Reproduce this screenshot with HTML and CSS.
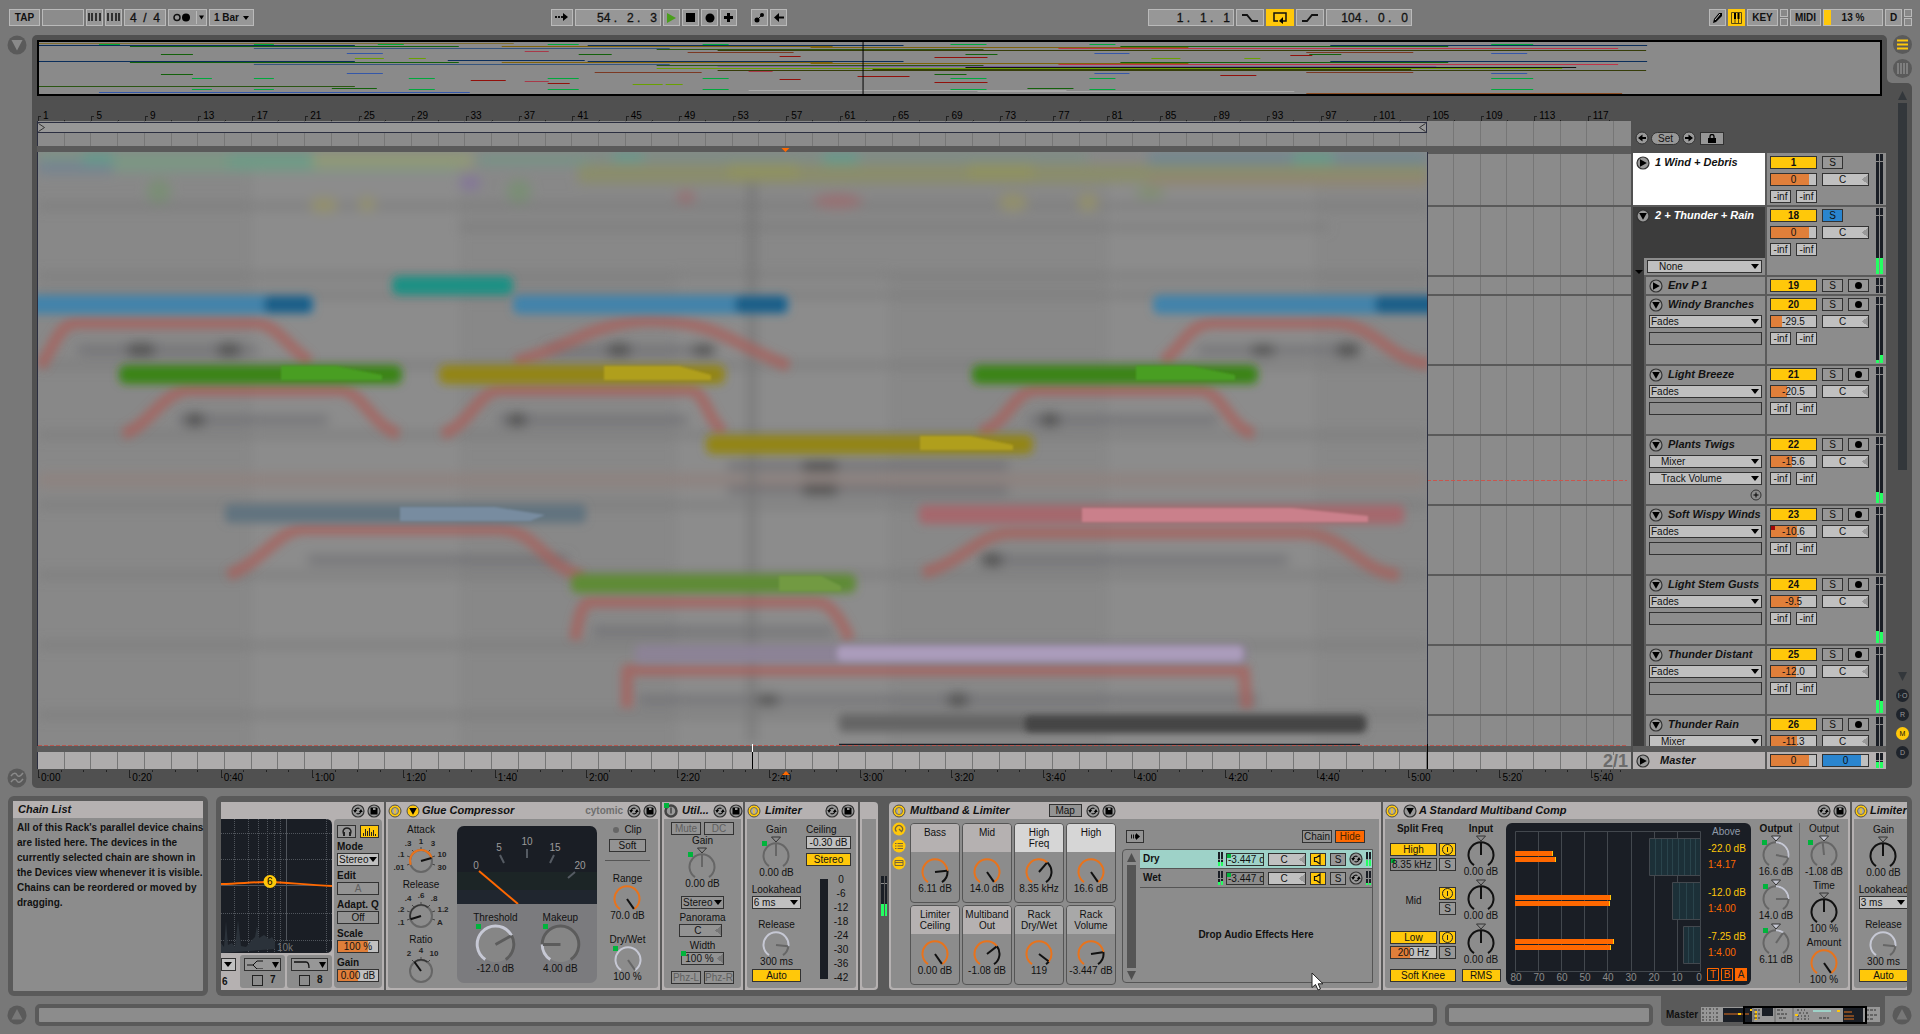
FILE: index.html
```html
<!DOCTYPE html>
<html lang="en">
<head>
<meta charset="utf-8">
<title>Arrangement</title>
<link rel="stylesheet" href="styles.css">
</head>
<body>
<svg class="defs" aria-hidden="true">
  <symbol id="knob" viewBox="0 0 28 28"><path class="k-track" pathLength="100" d="M7 24.2A12.5 12.5 0 1 1 21 24.2"/><path class="k-arc" pathLength="100" d="M7 24.2A12.5 12.5 0 1 1 21 24.2"/><path class="k-needle" d="M14 14V2"/></symbol>
  <symbol id="knob-c" viewBox="0 0 28 34"><path class="k-tri" d="M9.500 1h9l-4.500 5z"/><path class="k-track" pathLength="100" d="M7 30.200A12.500 12.500 0 1 1 21 30.200"/><path class="k-arc" pathLength="100" d="M7 30.200A12.500 12.500 0 1 1 21 30.200"/><path class="k-needle k-low" d="M14 20V8"/></symbol>
  <symbol id="power" viewBox="0 0 14 14"><circle cx="7" cy="7" r="6" fill="#ffc80a" stroke="#4d4d4d"/><circle cx="7" cy="7" r="3.500" fill="#aaa" stroke="#77704a"/><path d="M7 4.500v5" stroke="#ffc80a" stroke-width="1.500"/></symbol>
  <symbol id="power-off" viewBox="0 0 14 14"><circle cx="7" cy="7" r="5.500" fill="#999" stroke="#444" stroke-width="2.500"/><path d="M7 3.500v6" stroke="#444" stroke-width="1.500"/></symbol>
  <symbol id="down" viewBox="0 0 14 14"><circle cx="7" cy="7" r="6" fill="#999" stroke="#333" stroke-width="1.200"/><path d="M3.200 4h7.600L7 10.800z"/></symbol>
  <symbol id="down-y" viewBox="0 0 14 14"><circle cx="7" cy="7" r="6" fill="#ffc80a" stroke="#4d4d4d"/><path d="M3.200 4h7.600L7 10.800z"/></symbol>
  <symbol id="right" viewBox="0 0 14 14"><circle cx="7" cy="7" r="6" fill="#999" stroke="#333" stroke-width="1.200"/><path d="M4 3.200v7.600L10.800 7z"/></symbol>
  <symbol id="swap" viewBox="0 0 14 14"><circle cx="7" cy="7" r="6" fill="#999" stroke="#333" stroke-width="1.200"/><path d="M8.500 4.500C6 3.500 4.500 5 4 6.500M5.500 9.500C8 10.500 9.500 9 10 7.500" fill="none" stroke="#111" stroke-width="1.200"/><path d="M2.300 6h3.800L4 9zM7.900 8h3.800L10 5z"/></symbol>
  <symbol id="save" viewBox="0 0 14 14"><circle cx="7" cy="7" r="6" fill="#999" stroke="#333" stroke-width="1.200"/><path d="M3.500 3.500h6l1 1v6h-7z"/><path d="M6 4h2.500v2H6z" fill="#999"/></symbol>
  <symbol id="alt" viewBox="0 0 20 20"><circle cx="10" cy="10" r="9.500" fill="#5a5a5a"/><path d="M4.500 5h11L10 15.500z" fill="#8a8a8a"/></symbol>
  <symbol id="tri-up" viewBox="0 0 20 20"><circle cx="10" cy="10" r="9.500" fill="#5a5a5a"/><path d="M4.500 14.500h11L10 4z" fill="#787878"/></symbol>
  <symbol id="speaker" viewBox="0 0 12 11"><path d="M2.500 3.500h2L8 1v9L4.500 7.500h-2z" fill="none" stroke="#111" stroke-width="1.200"/></symbol>
</svg>

<header class="toolbar">
  <div class="group">
    <button class="tb w31">TAP</button>
    <input class="tb w42 blank" aria-label="Tempo" value="">
    <button class="tb w17" aria-label="Nudge down"><svg width="13" height="9"><path d="M1 0v8M4 0v8M8 0v8M12 0v8" stroke="#111" stroke-width="1.500"/></svg></button>
    <button class="tb w17" aria-label="Nudge up"><svg width="13" height="9"><path d="M1 0v8M5 0v8M9 0v8M12 0v8" stroke="#111" stroke-width="1.500"/></svg></button>
    <input class="tb w42 digits" aria-label="Time signature" value="4  /  4">
    <button class="tb w39 split" aria-label="Metronome"><svg width="36" height="13"><circle cx="7" cy="6.500" r="3" fill="none" stroke="#111" stroke-width="1.500"/><circle cx="16" cy="6.500" r="4"/><path d="M26.500 0v13" stroke="#bababa"/><path d="M29 4.500h5l-2.500 4z"/></svg></button>
    <span class="pick tbp w45"><select class="tb" aria-label="Quantization"><option>1 Bar</option></select></span>
  </div>
  <div class="grow-a"></div>
  <div class="group">
    <button class="tb w22" aria-label="Follow"><svg width="14" height="9"><path d="M0 4h2M3 4h2M6 4h4" stroke="#111" stroke-width="2"/><path d="M8 0v8l5-4z"/></svg></button>
    <input class="tb w86 digits num" aria-label="Position" value="54 .   2 .   3">
    <button class="tb w17" aria-label="Play"><svg width="9" height="10"><path d="M0 0v10l9-5z" fill="#4a9e1c"/></svg></button>
    <button class="tb w17" aria-label="Stop"><svg width="9" height="9"><path d="M0 0h9v9H0z"/></svg></button>
    <button class="tb w17" aria-label="Record"><svg width="10" height="10"><circle cx="5" cy="5" r="4.500"/></svg></button>
    <button class="tb w17" aria-label="Overdub"><svg width="9" height="9"><path d="M4.500 0v9M0 4.500h9" stroke="#000" stroke-width="3"/></svg></button>
    <button class="tb w17 apart" aria-label="Automation arm"><svg width="11" height="11"><path d="M3 8L8 3" stroke="#111"/><circle cx="3" cy="8" r="2.500"/><circle cx="8" cy="3" r="2"/></svg></button>
    <button class="tb w17" aria-label="Re-enable automation"><svg width="10" height="9"><path d="M2 4.500h8" stroke="#000" stroke-width="2"/><path d="M5 0v9L0 4.500z"/></svg></button>
  </div>
  <div class="grow-b"></div>
  <div class="group">
    <input class="tb w86 digits num" aria-label="Loop start" value="1 .   1 .   1">
    <button class="tb w28" aria-label="Punch in"><svg width="16" height="10"><path d="M0 2h5l5 6h6" fill="none" stroke="#111" stroke-width="1.800"/></svg></button>
    <button class="tb w28 on" aria-label="Loop"><svg width="14" height="12"><path d="M5 9H1V1h12v8h-3" fill="none" stroke="#111" stroke-width="1.500"/><path d="M10 5v7L6 9z"/></svg></button>
    <button class="tb w28" aria-label="Punch out"><svg width="16" height="10"><path d="M0 8h5l5-6h6" fill="none" stroke="#111" stroke-width="1.800"/></svg></button>
    <input class="tb w86 digits num" aria-label="Loop length" value="104 .   0 .   0">
  </div>
  <div class="grow-a"></div>
  <div class="group">
    <button class="tb w17" aria-label="Draw"><svg width="11" height="12"><path d="M1 11l1-4 5-6h3v3l-6 6z"/><path d="M3 8l5-6" stroke="#ccc"/></svg></button>
    <button class="tb w17 on" aria-label="Computer keyboard"><svg width="11" height="12"><path d="M.500.500h10v11H.500zM4 7v5M7.500 7v5" fill="none" stroke="#5a4a10"/><path d="M3 1h2v6H3zM6.500 1h2v6h-2z"/></svg></button>
    <button class="tb w31">KEY</button>
    <span class="leds"><i></i><i></i></span>
    <button class="tb w31">MIDI</button>
    <output class="tb w60 cpu">13 %</output>
    <button class="tb w17">D</button>
    <span class="leds"><i></i><i></i></span>
  </div>
</header>

<main class="arranger">
  <div class="rail">
    <button class="round" aria-label="Browser"><svg width="20" height="20"><use href="#alt"/></svg></button>
    <button class="round" aria-label="Groove pool"><svg width="20" height="20" viewBox="0 0 20 20"><circle cx="10" cy="10" r="9.500" fill="#5a5a5a"/><path d="M4 8c3-4 5-3 6-1s3 2 6-2M4 14c3-4 5-3 6-1s3 2 6-2" fill="none" stroke="#8a8a8a" stroke-width="1.500"/></svg></button>
  </div>
  <section class="arr-left">
    <div class="overview">
      <svg viewBox="39 42 1842 52" preserveAspectRatio="none">
        <g fill="none" stroke-width="1">
          <path stroke="#7d6b30" d="M39 43.500H514"/>
          <path stroke="#00a83c" d="M99 44.500h21M254 44.500h20M378 44.500h26M548 44.500h31M703 44.500h26M951 44.500h36M1090 44.500h26M1492 44.500h42M192 78.500h20M254 78.500h20M409 78.500h26M548 78.500h31M703 78.500h26M951 78.500h36M1090 78.500h26M1492 78.500h42M192 89.500h20M254 89.500h20M409 89.500h26M548 89.500h31M703 89.500h26M951 89.500h36M1090 89.500h26M1492 89.500h42"/>
          <path stroke="#0a2d5a" d="M39 45.500H355M588 45.500H904M1331 45.500H1648M448 60.500H585M39 61.500H355M588 61.500H904M1331 61.500H1648"/>
          <path stroke="#12600a" d="M130 46.500H459M1121 46.500H1449M161 54.500H193M579 54.500H612M966 54.500H998M1310 54.500H1342M130 62.500H459M1121 62.500H1449M161 74.500H193M935 74.500H967M332 88.500H377M1028 88.500H1074"/>
          <path stroke="#80620a" d="M502 46.500H833M811 47.500H1189M502 62.500H833M811 63.500H1189"/>
          <path stroke="#35547c" d="M254 48.500H670M254 64.500H670"/>
          <path stroke="#bf3248" d="M1059 48.500H1619M1059 64.500H1619"/>
          <path stroke="#2a5512" d="M657 49.500H984M657 65.500H984M39 86.500H355"/>
          <path stroke="#353c08" d="M718 50.500H1647M718 70.500H1647M873 69.500H1412"/>
          <path stroke="#a83848" d="M525 51.500h24M749 71.500h24M525 81.500h24"/>
          <path stroke="#7a3822" d="M688 52.500H794M1307 52.500H1414M595 72.500H702M1307 72.500H1414"/>
          <path stroke="#3356a8" d="M347 53.500h36M1095 53.500h35M1492 53.500h36M347 73.500h36M1095 73.500h35M1492 73.500h36M99 92.500H470"/>
          <path stroke="#920f0a" d="M1291 55.500h22M780 56.500h21M935 57.500h53M1221 75.500h36M858 76.500h52M780 79.500h21M471 80.500h35M935 82.500h53M548 83.500h22"/>
          <path stroke="#68a000" d="M355 58.500h29M409 58.500h17M1152 58.500h29M1245 58.500h16M657 68.500H1563M633 84.500h30M666 84.500h17"/>
          <path stroke="#7a6098" d="M718 66.500H1437"/>
          <path stroke="#111" d="M966 67.500H1577"/>
          <path stroke="#a8a8a8" d="M749 90.500H1067M978 91.500H1295"/>
          <path stroke="#8a4a20" d="M1307 93.500H1623"/>
        </g>
        <path d="M863.500 42v52" stroke="#000"/>
      </svg>
    </div>
    <div class="body">
      <div class="timeline">
        <div class="bars">
          <span>1</span><span>5</span><span>9</span><span>13</span><span>17</span><span>21</span><span>25</span><span>29</span><span>33</span><span>37</span><span>41</span><span>45</span><span>49</span><span>53</span><span>57</span><span>61</span><span>65</span><span>69</span><span>73</span><span>77</span><span>81</span><span>85</span><span>89</span><span>93</span><span>97</span><span>101</span><span>105</span><span>109</span><span>113</span><span>117</span>
        </div>
        <div class="scrub lines">
          <div class="brace"><svg width="7" height="9"><path d="M.500.500l6 4-6 4" fill="none" stroke="#333"/></svg><svg width="7" height="9"><path d="M6.500.500l-6 4 6 4" fill="none" stroke="#333"/></svg></div>
        </div>
        <div class="gap"><svg viewBox="0 0 1593 6" preserveAspectRatio="none"><path d="M744 2h8l-4 4z" fill="#ff6a00"/></svg></div>
        <div class="canvas lines">
          <svg viewBox="0 0 1593 594" preserveAspectRatio="none">
            <defs>
              <clipPath id="sel"><path d="M0 0h1389v594H0z"/></clipPath>
              <filter id="b1" x="-5%" y="-20%" width="110%" height="140%"><feGaussianBlur stdDeviation="1"/></filter>
              <filter id="b3" x="-5%" y="-50%" width="110%" height="200%"><feGaussianBlur stdDeviation="3"/></filter>
              <filter id="b4" x="-5%" y="-5%" width="110%" height="110%"><feGaussianBlur stdDeviation="4"/></filter>
              <filter id="b5" x="-5%" y="-5%" width="110%" height="110%"><feGaussianBlur stdDeviation="6"/></filter>
            </defs>
            <path d="M1389 0h204v2H1389zM1389 53h204v2H1389zM1389 123h204v2H1389zM1389 142h204v2H1389zM1389 212h204v2H1389zM1389 282h204v2H1389zM1389 352h204v2H1389zM1389 422h204v2H1389zM1389 492h204v2H1389zM1389 562h204v2H1389z" fill="#5a5a5a"/>
            <path d="M1389 328.500h200" stroke="#c9564e" stroke-dasharray="4 2"/>
            <g clip-path="url(#sel)">
              <path d="M0 0h1389v594H0z" fill="#888"/>
              <g filter="url(#b5)">
                <path d="M215 20h206v580H215zM640 120h210v480H640zM1071 20h205v580h-205z" fill="#8c8c8c"/>
                <path d="M0 54h1389M0 124h1389M0 143h1389M0 213h1389M0 283h1389M0 353h1389M0 423h1389M0 493h1389M0 563h1389M420 75h870" stroke="#777" stroke-width="7" opacity=".6"/>
                <path d="M0 328h1389" stroke="#90807c" stroke-width="14" opacity=".7"/>
                <path d="M0 0h420v20H0z" fill="#7b9684"/><path d="M0 8h75v14H0z" fill="#768490"/><path d="M190 0h90v18h-90z" fill="#6f9a86"/>
                <path d="M275 0h160v16H275z" fill="#909878"/><path d="M440 2h110v12H440z" fill="#789286"/><path d="M550 0h500v10H550z" fill="#7d8d84"/><path d="M1110 0h279v14h-279z" fill="#728790"/>
                <path d="M540 13h850v18H540z" fill="#8a8d6a"/><path d="M1110 24h280v10h-280z" fill="#908672"/>
                <path d="M785 0h35v12h-35zM1255 0h40v12h-40zM575 0h30v10h-30zM45 0h30v12H45z" fill="#659a8a"/>
                <path d="M930 12h65v14h-65zM690 12h70v14h-70z" fill="#90925e"/>
                <circle cx="121" cy="39" r="12" fill="#7a8e76"/><circle cx="481" cy="39" r="12" fill="#7a8e76"/>
                <ellipse cx="286" cy="53" rx="14" ry="8" fill="#928f6c"/><ellipse cx="329" cy="52" rx="9" ry="8" fill="#918f70"/>
                <ellipse cx="432" cy="31" rx="11" ry="7" fill="#84769a"/><ellipse cx="648" cy="45" rx="9" ry="6" fill="#996f72"/>
                <ellipse cx="800" cy="49" rx="24" ry="7" fill="#987072"/><ellipse cx="975" cy="50" rx="14" ry="9" fill="#928f6c"/><ellipse cx="1050" cy="50" rx="10" ry="9" fill="#928f6c"/><ellipse cx="1112" cy="41" rx="15" ry="6" fill="#808e72"/>
                <path d="M40 198h180M510 198h150M1160 198h160M140 268h150M460 268h190M990 268h190M690 314h280M690 338h280M270 408h260M950 408h300M555 479h240M600 548h620" stroke="#707073" stroke-width="8"/>
                <path d="M90 198h26M180 198h22M570 198h22M655 198h22M1214 198h22M1299 198h22M148 268h18M470 268h18M1003 268h18M765 314h34M765 338h34M944 408h20M720 548h20M910 548h20" stroke="#505050" stroke-width="12"/>
                <path d="M714 30v560" stroke="#727272" stroke-width="6"/>
              </g>
              <g filter="url(#b4)" fill="none" stroke="#a8605b" stroke-width="12" stroke-linejoin="round" opacity=".75">
                <path d="M2 215C18 190 22 172 38 171H218C238 172 250 195 272 210"/>
                <path d="M477 210C510 200 530 190 542 185C575 170 600 168 620 169C680 170 700 195 751 214"/>
                <path d="M85 282C110 275 125 240 150 238H302C325 240 335 275 361 282"/>
                <path d="M404 282C430 275 440 240 461 238H652C668 240 670 270 686 280"/>
                <path d="M190 423C225 410 240 378 265 377H459C500 378 500 410 545 425"/>
                <path d="M537 488Q542 450 552 450H778Q796 450 812 488"/>
                <path d="M589 556V518H1206L1209 557"/>
                <path d="M885 421C925 410 940 382 971 381H1264C1310 382 1320 420 1361 423"/>
                <path d="M942 280C970 272 975 240 997 238H1162C1185 240 1190 275 1216 282"/>
                <path d="M1125 209C1145 195 1150 172 1175 171H1295C1340 172 1350 210 1392 212"/>
              </g>
              <g filter="url(#b4)">
                <g fill="#4383aa"><rect x="-12" y="143" width="288" height="19" rx="6"/><rect x="475" y="143" width="276" height="19" rx="6"/><rect x="1115" y="143" width="290" height="19" rx="6"/></g>
                <g fill="#1a5f88"><rect x="226" y="144" width="48" height="17" rx="6"/><rect x="697" y="144" width="52" height="17" rx="6"/><rect x="1337" y="144" width="70" height="17" rx="6"/></g>
                <rect x="354" y="124" width="121" height="19" rx="7" fill="#1c9084"/>
                <g fill="#3a8418"><rect x="81" y="213" width="283" height="19" rx="7"/><rect x="934" y="213" width="286" height="19" rx="7"/></g>
                <g fill="#938514"><rect x="401" y="213" width="286" height="19" rx="7"/><rect x="668" y="283" width="327" height="19" rx="7"/></g>
                <rect x="187" y="352" width="361" height="19" rx="5" fill="#62737f"/>
                <rect x="533" y="422" width="285" height="19" rx="7" fill="#5e8b34"/>
                <rect x="597" y="493" width="612" height="18" rx="5" fill="#8c8296"/>
                <rect x="801" y="562" width="528" height="18" rx="4" fill="#656565"/>
                <rect x="881" y="353" width="485" height="19" rx="5" fill="#a5686d"/>
              </g>
              <g filter="url(#b1)">
                <g fill="#4a9e22"><path d="M243 214h55l46 9v5H243zM1098 214h55l44 9v5h-99z"/></g>
                <g fill="#b09f1f"><path d="M566 214h75l32 9v5H566zM882 284h50l43 9v5h-93z"/></g>
                <path d="M362 355h95l50 8-15 6H362z" fill="#788ca0"/><path d="M741 424h42l20 10v5h-62z" fill="#729a42"/>
                <path d="M1044 356h210l76 8v6h-286z" fill="#ca808b"/>
              </g>
              <rect x="799" y="494" width="406" height="15" rx="5" fill="#ab9cbb" filter="url(#b3)"/>
              <rect x="987" y="564" width="340" height="16" rx="5" fill="#444" filter="url(#b3)"/>
              <path d="M801 592.500h521" stroke="#1a1e25" stroke-width="1.500"/>
            </g>
            <path d="M0 593.500h1590" stroke="#b5564e" stroke-dasharray="4 2"/>
            <path d="M1389.500 0v594" stroke="#2b2e40"/>
          </svg>
        </div>
        <div class="gap"></div>
        <div class="master-lane lines"><b>2/1</b><svg viewBox="0 -8 1593 32" preserveAspectRatio="none"><path d="M714.500-8v8" stroke="#fff"/><path d="M714.500 0v17M1389.500-8v25" stroke="#000"/><path d="M744 23h8l-4-4z" fill="#ff6a00"/></svg></div>
        <div class="times">
          <span>0:00</span><span>0:20</span><span>0:40</span><span>1:00</span><span>1:20</span><span>1:40</span><span>2:00</span><span>2:20</span><span>2:40</span><span>3:00</span><span>3:20</span><span>3:40</span><span>4:00</span><span>4:20</span><span>4:40</span><span>5:00</span><span>5:20</span><span>5:40</span>
        </div>
      </div>
      <div class="heads">
        <div class="locators">
          <button class="round" aria-label="Previous locator"><svg width="14" height="14" viewBox="0 0 14 14"><circle cx="7" cy="7" r="6" fill="#999" stroke="#333"/><path d="M6 7h5" stroke="#000" stroke-width="2"/><path d="M7.500 3.500v7L3 7z"/></svg></button>
          <button class="set">Set</button>
          <button class="round" aria-label="Next locator"><svg width="14" height="14" viewBox="0 0 14 14"><circle cx="7" cy="7" r="6" fill="#999" stroke="#333"/><path d="M3 7h5" stroke="#000" stroke-width="2"/><path d="M6.500 3.500v7L11 7z"/></svg></button>
          <button class="box w24" aria-label="Lock envelopes"><svg width="8" height="9"><path d="M0 4h8v5H0z"/><path d="M2 4V2.500a2 2 0 0 1 4 0V4" fill="none" stroke="#000" stroke-width="1.300"/></svg></button>
        </div>
        <div class="tracks">
          <article class="track solo-h">
            <div class="title white"><h3><svg class="ic"><use href="#right"/></svg>1 Wind + Debris</h3></div>
            <div class="mix"><div class="cells"><button class="box act">1</button><button class="box s">S</button><input class="box vol" aria-label="Volume" value="0" style="--f:84%"><input class="box pan" aria-label="Pan" value="C"><output class="box s inf">-inf</output><output class="box s inf">-inf</output></div><span class="meter"></span></div>
          </article>
          <div class="group-tracks">
          <article class="track">
            <div class="title dark"><h3><svg class="ic"><use href="#down"/></svg>2 + Thunder + Rain</h3><div class="sub"><span class="pick"><select class="box in" aria-label="Automation"><option>None</option></select></span></div></div>
            <div class="mix"><div class="cells"><button class="box act">18</button><button class="box s blue">S</button><input class="box vol" aria-label="Volume" value="0" style="--f:84%"><input class="box pan" aria-label="Pan" value="C"><output class="box s inf">-inf</output><output class="box s inf">-inf</output></div><span class="meter" style="--a:24%;--b:24%"></span></div>
          </article>
          <article class="track small child">
            <div class="title"><h3><svg class="ic"><use href="#right"/></svg>Env P 1</h3></div>
            <div class="mix"><div class="cells"><button class="box act">19</button><button class="box s">S</button><button class="box s rec" aria-label="Arm"></button></div><span class="meter"></span></div>
          </article>
          <article class="track child">
            <div class="title"><h3><svg class="ic"><use href="#down"/></svg>Windy Branches</h3><span class="pick"><select class="box" aria-label="Device"><option>Fades</option></select></span><span class="box empty"></span></div>
            <div class="mix"><div class="cells"><button class="box act">20</button><button class="box s">S</button><button class="box s rec" aria-label="Arm"></button><input class="box vol" aria-label="Volume" value="-29.5" style="--f:24%"><input class="box pan" aria-label="Pan" value="C"><output class="box s inf">-inf</output><output class="box s inf">-inf</output></div><span class="meter" style="--a:4%;--b:12%"></span></div>
          </article>
          <article class="track child">
            <div class="title"><h3><svg class="ic"><use href="#down"/></svg>Light Breeze</h3><span class="pick"><select class="box" aria-label="Device"><option>Fades</option></select></span><span class="box empty"></span></div>
            <div class="mix"><div class="cells"><button class="box act">21</button><button class="box s">S</button><button class="box s rec" aria-label="Arm"></button><input class="box vol" aria-label="Volume" value="-20.5" style="--f:36%"><input class="box pan" aria-label="Pan" value="C"><output class="box s inf">-inf</output><output class="box s inf">-inf</output></div><span class="meter"></span></div>
          </article>
          <article class="track child">
            <div class="title"><h3><svg class="ic"><use href="#down"/></svg>Plants Twigs</h3><span class="pick"><select class="box in" aria-label="Device"><option>Mixer</option></select></span><span class="pick"><select class="box in" aria-label="Parameter"><option>Track Volume</option></select></span><button class="round add" aria-label="Add lane"><svg width="12" height="12" viewBox="0 0 12 12"><circle cx="6" cy="6" r="5" fill="none" stroke="#333"/><path d="M6 3.500v5M3.500 6h5" stroke="#000"/></svg></button></div>
            <div class="mix"><div class="cells"><button class="box act">22</button><button class="box s">S</button><button class="box s rec" aria-label="Arm"></button><input class="box vol" aria-label="Volume" value="-15.6" style="--f:46%"><input class="box pan" aria-label="Pan" value="C"><output class="box s inf">-inf</output><output class="box s inf">-inf</output></div><span class="meter" style="--a:16%;--b:15%"></span></div>
          </article>
          <article class="track child">
            <div class="title"><h3><svg class="ic"><use href="#down"/></svg>Soft Wispy Winds</h3><span class="pick"><select class="box" aria-label="Device"><option>Fades</option></select></span><span class="box empty"></span></div>
            <div class="mix"><div class="cells"><button class="box act">23</button><button class="box s">S</button><button class="box s rec" aria-label="Arm"></button><input class="box vol auto" aria-label="Volume" value="-10.6" style="--f:58%"><input class="box pan" aria-label="Pan" value="C"><output class="box s inf">-inf</output><output class="box s inf">-inf</output></div><span class="meter"></span></div>
          </article>
          <article class="track child">
            <div class="title"><h3><svg class="ic"><use href="#down"/></svg>Light Stem Gusts</h3><span class="pick"><select class="box" aria-label="Device"><option>Fades</option></select></span><span class="box empty"></span></div>
            <div class="mix"><div class="cells"><button class="box act">24</button><button class="box s">S</button><button class="box s rec" aria-label="Arm"></button><input class="box vol" aria-label="Volume" value="-9.5" style="--f:62%"><input class="box pan" aria-label="Pan" value="C"><output class="box s inf">-inf</output><output class="box s inf">-inf</output></div><span class="meter" style="--a:18%;--b:17%"></span></div>
          </article>
          <article class="track child">
            <div class="title"><h3><svg class="ic"><use href="#down"/></svg>Thunder Distant</h3><span class="pick"><select class="box" aria-label="Device"><option>Fades</option></select></span><span class="box empty"></span></div>
            <div class="mix"><div class="cells"><button class="box act">25</button><button class="box s">S</button><button class="box s rec" aria-label="Arm"></button><input class="box vol" aria-label="Volume" value="-12.0" style="--f:56%"><input class="box pan" aria-label="Pan" value="C"><output class="box s inf">-inf</output><output class="box s inf">-inf</output></div><span class="meter" style="--a:20%;--b:18%"></span></div>
          </article>
          <article class="track child last">
            <div class="title"><h3><svg class="ic"><use href="#down"/></svg>Thunder Rain</h3><span class="pick"><select class="box in" aria-label="Device"><option>Mixer</option></select></span></div>
            <div class="mix"><div class="cells"><button class="box act">26</button><button class="box s">S</button><button class="box s rec" aria-label="Arm"></button><input class="box vol" aria-label="Volume" value="-11.3" style="--f:58%"><input class="box pan" aria-label="Pan" value="C"></div><span class="meter"></span></div>
          </article>
          </div>
        </div>
        <article class="track small master">
          <div class="title"><h3><svg class="ic"><use href="#right"/></svg>Master</h3></div>
          <div class="mix"><div class="cells"><input class="box vol" aria-label="Master volume" value="0" style="--f:84%"><input class="box vol cue" aria-label="Cue volume" value="0" style="--f:84%"></div><span class="meter" style="--a:40%;--b:40%"></span></div>
        </article>
      </div>
    </div>
  </section>
  <aside class="arr-right">
    <div class="notch-back"><div class="notch">
      <button class="round" aria-label="Arrangement view"><svg width="19" height="19" viewBox="0 0 19 19"><circle cx="9.500" cy="9.500" r="9.500" fill="#5a5a5a"/><path d="M4 5.500h11M4 9.500h11M4 13.500h11" stroke="#ffc80a" stroke-width="2"/></svg></button>
      <button class="round" aria-label="Session view"><svg width="19" height="19" viewBox="0 0 19 19"><circle cx="9.500" cy="9.500" r="9.500" fill="#5a5a5a"/><path d="M5 4v11M8 4v11M11 4v11M14 4v11" stroke="#8a8a8a" stroke-width="1.500"/></svg></button>
    </div></div>
    <div class="scroller">
      <svg width="9" height="9"><path d="M0 9h9L4.500 0z" fill="#33373b"/></svg>
      <i class="thumb"></i>
      <svg class="dn" width="9" height="9"><path d="M0 0h9L4.500 9z" fill="#33373b"/></svg>
      <div class="modes"><button>I·O</button><button>R</button><button class="on">M</button><button>D</button></div>
    </div>
  </aside>
</main>

<section class="bottom">
  <aside class="info"><h2>Chain List</h2><p>All of this Rack's parallel device chains<br>are listed here. The devices in the<br>currently selected chain are shown in<br>the Devices view whenever it is visible.<br>Chains can be reordered or moved by<br>dragging.</p></aside>
  <div class="devices">
    <section class="dev eq">
      <h2><span class="sp"></span><svg class="ic"><use href="#swap"/></svg><svg class="ic"><use href="#save"/></svg></h2>
      <div class="dbody">
        <div class="eq-l">
          <svg class="graph" viewBox="0 0 111 134"><path d="M0 0h105q6 0 6 6v122q0 6-6 6H0z" fill="#1a1e25"/><path d="M0 14.500h111M0 40.500h111M0 94.500h111M0 121.500h111M13.500 0v134M27.500 0v134M37.500 0v134M46.500 0v134M53.500 0v134M59.500 0v134M105.500 0v134" stroke="#50555c" stroke-dasharray="1 1"/><path d="M65.500 0v122M0 66.500h111" stroke="#50555c"/><path d="M0 134v-10l3 4 2-26 2 24 4-2 3 4 3-27 3 26 5 1 5-6 4-4 2-11 2 12 5-3 5 4 3-2 3 5v7z" fill="#2b323a"/><path d="M0 65C25 64 35 63 49 63S85 66 111 67" fill="none" stroke="#ff6800" stroke-width="2"/><circle cx="49" cy="62.500" r="6.500" fill="#ffc80a"/><text x="46" y="66" class="t10">6</text><text x="56" y="132" class="t10 dim">10k</text></svg>
          <div class="chips">
            <div class="chip cut"><span class="pick"><select class="box" aria-label="Filter 6 type"><option></option></select></span><b>6</b></div>
            <div class="chip"><button class="box shape" aria-label="Filter 7 type"><svg width="34" height="9"><path d="M1 5h6l4-4h6M7 5l4 4h6" fill="none" stroke="#111"/><path d="M26 2h7l-3.500 6z"/></svg></button><label><input type="checkbox"> 7</label></div>
            <div class="chip"><button class="box shape" aria-label="Filter 8 type"><svg width="34" height="9"><path d="M1 2h12q3 0 3 6" fill="none" stroke="#111" stroke-width="1.300"/><path d="M26 2h7l-3.500 6z"/></svg></button><label><input type="checkbox"> 8</label></div>
          </div>
        </div>
        <div class="eq-r">
          <div class="row"><button class="box w19" aria-label="Audition"><svg width="10" height="9"><path d="M2.500 8C0 5 1 1 5 1s5 4 2.500 7" fill="none" stroke="#222" stroke-width="1.500"/><path d="M1 5h2v4H1zM7 5h2v4H7z" fill="#222"/></svg></button><button class="box w19 y" aria-label="Analyze"><svg width="13" height="9"><path d="M.500 9V6M2.500 9V2M4.500 9V4M6.500 9V1M8.500 9V5M10.500 9V3M12.500 9V7" stroke="#222"/></svg></button></div>
          <label>Mode<span class="pick tight"><select class="box"><option>Stereo</option></select></span></label>
          <label>Edit<input class="box flat mute" value="A"></label>
          <label>Adapt. Q<input class="box flat" value="Off"></label>
          <label>Scale<input class="box vol" value="100 %" style="--f:75%"></label>
          <label>Gain<input class="box vol" value="0.00 dB" style="--f:50%"></label>
        </div>
      </div>
    </section>

    <section class="dev glue">
      <h2><svg class="ic"><use href="#power"/></svg><svg class="ic"><use href="#down-y"/></svg>Glue Compressor<span class="sp"></span><i class="brand">cytomic</i><svg class="ic"><use href="#swap"/></svg><svg class="ic"><use href="#save"/></svg></h2>
      <div class="dbody">
        <div class="dials">
          <div class="dial">Attack<svg viewBox="-32 -25 64 40"><path d="M-14 4l3-1M-14-5l3 1M-9-11l2 2M0-14v3M9-11l-2 2M14-5l-3 1M14 4l-3-1" stroke="#444"/><circle r="11" class="ring"/><path d="M-10.300 3.800A11 11 0 1 1 10.600-3" fill="none" stroke="#e8731c" stroke-width="2"/><path d="M0 0L10.500-3" stroke="#111" stroke-width="2"/><g class="t8"><text x="-22" y="9">.01</text><text x="-20" y="-4">.1</text><text x="-13" y="-15">.3</text><text x="0" y="-17">1</text><text x="12" y="-15">3</text><text x="21" y="-4">10</text><text x="21" y="9">30</text></g></svg></div>
          <div class="dial">Release<svg viewBox="-32 -25 64 40"><path d="M-14 4l3-1M-14-5l3 1M-9-11l2 2M0-14v3M9-11l-2 2M14-5l-3 1M14 4l-3-1" stroke="#444"/><circle r="11" class="ring"/><path d="M-10.500 3A11 11 0 0 1 7-8.500" fill="none" stroke="#333" stroke-width="1.500"/><path d="M0 0L-10.500 3.200" stroke="#111" stroke-width="2"/><g class="t8"><text x="-20" y="9">.1</text><text x="-20" y="-4">.2</text><text x="-13" y="-15">.4</text><text x="0" y="-18">.6</text><text x="13" y="-15">.8</text><text x="22" y="-4">1.2</text><text x="19" y="9">A</text></g></svg></div>
          <div class="dial">Ratio<svg viewBox="-32 -25 64 40"><path d="M-9-11l2 2M0-14v3M9-11l-2 2" stroke="#444"/><circle r="11" class="ring"/><path d="M-6.500-9A11 11 0 0 1 6.500-9" fill="none" stroke="#333" stroke-width="1.500"/><path d="M0 0L-6.500-9" stroke="#111" stroke-width="2"/><g class="t8"><text x="-12" y="-15">2</text><text x="0" y="-18">4</text><text x="13" y="-15">10</text></g></svg></div>
        </div>
        <div class="vu">
          <svg class="needle" viewBox="0 0 140 78"><path d="M0 46h140v18H0z" fill="#1c2526"/><path d="M0 64h140v14H0z" fill="#20262f"/><path d="M43 29l4 8M70 23v9M97 29l-4 8M111 52l7-6" stroke="#555b63" stroke-width="2"/><path d="M22 45l39 33" stroke="#ff6800" stroke-width="2"/><g class="t10 grey" text-anchor="middle"><text x="19" y="43">0</text><text x="42" y="25">5</text><text x="70" y="19">10</text><text x="98" y="25">15</text><text x="123" y="43">20</text></g></svg>
          <div class="pair">
            <div class="ctl mapped">Threshold<svg class="knob big" style="--v:71"><use href="#knob"/></svg><output>-12.0 dB</output></div>
            <div class="ctl mapped">Makeup<svg class="knob big" style="--v:19"><use href="#knob"/></svg><output>4.00 dB</output></div>
          </div>
        </div>
        <div class="glue-r">
          <span class="clip"><i></i>Clip</span><button class="box flat w37">Soft</button><hr>
          <div class="ctl">Range<svg class="knob or" style="--v:100"><use href="#knob"/></svg><output>70.0 dB</output></div>
          <div class="ctl mapped">Dry/Wet<svg class="knob lt" style="--v:100"><use href="#knob"/></svg><output>100 %</output></div>
        </div>
      </div>
    </section>

    <section class="dev util">
      <h2><svg class="ic"><use href="#power-off"/></svg>Util...<span class="sp"></span><svg class="ic"><use href="#swap"/></svg><svg class="ic"><use href="#save"/></svg></h2>
      <div class="dbody">
        <div class="row"><button class="box flat mute w30">Mute</button><button class="box flat mute w30">DC</button></div>
        <div class="ctl mapped low">Gain<svg class="knob c gy" style="--v:50"><use href="#knob-c"/></svg><output>0.00 dB</output></div>
        <span class="pick tight w43"><select class="box flat" aria-label="Channel mode"><option>Stereo</option></select></span>
        <label>Panorama<input class="box pan flat w43" value="C"></label>
        <label class="mapped wd">Width<input class="box pan flat w43" value="100 %"></label>
        <div class="row"><button class="box flat mute w30">Phz-L</button><button class="box flat mute w30">Phz-R</button></div>
      </div>
    </section>

    <section class="dev lim">
      <h2><svg class="ic"><use href="#power"/></svg>Limiter<span class="sp"></span><svg class="ic"><use href="#swap"/></svg><svg class="ic"><use href="#save"/></svg></h2>
      <div class="dbody">
        <div class="lim-l">
          <div class="ctl mapped low">Gain<svg class="knob c gy" style="--v:50"><use href="#knob-c"/></svg><output>0.00 dB</output></div>
          <label>Lookahead<span class="pick w49"><select class="box"><option>6 ms</option></select></span></label>
          <div class="ctl">Release<svg class="knob lt" style="--v:83"><use href="#knob"/></svg><output>300 ms</output></div>
          <button class="box y w49">Auto</button>
        </div>
        <div class="lim-r">
          <label>Ceiling<input class="box field w45" value="-0.30 dB"></label>
          <button class="box y w45">Stereo</button>
          <div class="scale"><i></i><ol><li>0</li><li>-6</li><li>-12</li><li>-18</li><li>-24</li><li>-30</li><li>-36</li><li>-42</li></ol></div>
        </div>
      </div>
    </section>
    <div class="dev tail"><h2></h2><div class="dbody"></div></div>
    <div class="between"><span class="meter" style="--a:30%;--b:30%"></span></div>

    <section class="dev rack">
      <h2><svg class="ic"><use href="#power"/></svg>Multband &amp; Limiter<button class="box flat map">Map</button><svg class="ic"><use href="#swap"/></svg><svg class="ic"><use href="#save"/></svg></h2>
      <div class="dbody">
        <div class="tabs">
          <button class="round" aria-label="Macros"><svg width="14" height="14" viewBox="0 0 14 14"><circle cx="7" cy="7" r="6.500" fill="#ffc80a"/><path d="M4.500 9.500a3.500 3.500 0 1 1 5 0M7 7l3 3" fill="none" stroke="#77663a" stroke-width="1.300"/></svg></button>
          <button class="round" aria-label="Chain list"><svg width="14" height="14" viewBox="0 0 14 14"><circle cx="7" cy="7" r="6.500" fill="#ffc80a"/><path d="M3 4.500h1.500M5.500 4.500H11M3 7h1.500M5.500 7H11M3 9.500h1.500M5.500 9.500H11" stroke="#77663a"/></svg></button>
          <button class="round" aria-label="Devices"><svg width="14" height="14" viewBox="0 0 14 14"><circle cx="7" cy="7" r="6.500" fill="#ffc80a"/><path d="M3 4.500h8v5H3zM3 6.500h8" fill="none" stroke="#77663a"/></svg></button>
        </div>
        <div class="macros">
          <div class="macro"><h4>Bass</h4><svg class="knob or" style="--v:79"><use href="#knob"/></svg><output>6.11 dB</output></div>
          <div class="macro"><h4>Mid</h4><svg class="knob or" style="--v:100"><use href="#knob"/></svg><output>14.0 dB</output></div>
          <div class="macro hi"><h4>High<br>Freq</h4><svg class="knob or" style="--v:64"><use href="#knob"/></svg><output>8.35 kHz</output></div>
          <div class="macro hi"><h4>High</h4><svg class="knob or" style="--v:100"><use href="#knob"/></svg><output>16.6 dB</output></div>
          <div class="macro"><h4>Limiter<br>Ceiling</h4><svg class="knob or" style="--v:100"><use href="#knob"/></svg><output>0.00 dB</output></div>
          <div class="macro"><h4>Multiband<br>Out</h4><svg class="knob or" style="--v:68"><use href="#knob"/></svg><output>-1.08 dB</output></div>
          <div class="macro gr"><h4>Rack<br>Dry/Wet</h4><svg class="knob or" style="--v:94"><use href="#knob"/></svg><output>119</output></div>
          <div class="macro gr"><h4>Rack<br>Volume</h4><svg class="knob or" style="--v:78"><use href="#knob"/></svg><output>-3.447 dB</output></div>
        </div>
        <div class="chains">
          <div class="chain-bar"><button class="box flat w18" aria-label="Auto select"><svg width="9" height="7"><path d="M.500 1.500v4M2.500 1.500v4M4.500 1.500v4" stroke="#111"/><path d="M5 0v7l4-3.500z"/></svg></button><span class="sp"></span><button class="box flat w30">Chain</button><button class="box hide w30">Hide</button></div>
          <div class="chain-box">
            <div class="cs"><svg width="9" height="9"><path d="M0 9h9L4.500 0z" fill="#4f4f4f"/></svg><i></i><svg width="9" height="9"><path d="M0 0h9L4.500 9z" fill="#4f4f4f"/></svg></div>
            <div class="list">
              <div class="chain sel"><b>Dry</b><span class="meter" style="--a:28%;--b:32%"></span><input class="box dot w38" aria-label="Dry volume" value="-3.447 dB"><input class="box pan w38" aria-label="Dry pan" value="C"><button class="box y w16" aria-label="Dry on"><svg width="12" height="11"><use href="#speaker"/></svg></button><button class="box w16">S</button><svg class="ic"><use href="#swap"/></svg><span class="meter" style="--a:40%;--b:40%"></span></div>
              <div class="chain"><b>Wet</b><span class="meter" style="--a:24%;--b:28%"></span><input class="box dot w38" aria-label="Wet volume" value="-3.447 dB"><input class="box pan w38" aria-label="Wet pan" value="C"><button class="box y w16" aria-label="Wet on"><svg width="12" height="11"><use href="#speaker"/></svg></button><button class="box w16">S</button><svg class="ic"><use href="#swap"/></svg><span class="meter" style="--a:14%;--b:14%"></span></div>
              <div class="drop">Drop Audio Effects Here</div>
            </div>
          </div>
        </div>
      </div>
    </section>

    <section class="dev mb">
      <h2><svg class="ic"><use href="#power"/></svg><svg class="ic"><use href="#down"/></svg>A Standard Multiband Comp<span class="sp"></span><svg class="ic"><use href="#swap"/></svg><svg class="ic"><use href="#save"/></svg></h2>
      <div class="dbody">
        <div class="bands">
          <b>Split Freq</b>
          <div class="band"><button class="box y">High</button><button class="box y i" aria-label="High band on"></button><input class="box dot" aria-label="High split" value="8.35 kHz"><button class="box">S</button></div>
          <div class="band"><span>Mid</span><button class="box y i" aria-label="Mid band on"></button><button class="box">S</button></div>
          <div class="band"><button class="box y">Low</button><button class="box y i" aria-label="Low band on"></button><input class="box vol" aria-label="Low split" value="200 Hz" style="--f:42%"><button class="box">S</button></div>
          <button class="box y w66">Soft Knee</button>
        </div>
        <div class="col">
          <div class="ctl"><b>Input</b><svg class="knob c" style="--v:50"><use href="#knob-c"/></svg><output>0.00 dB</output></div>
          <div class="ctl"><svg class="knob c" style="--v:50"><use href="#knob-c"/></svg><output>0.00 dB</output></div>
          <div class="ctl"><svg class="knob c" style="--v:50"><use href="#knob-c"/></svg><output>0.00 dB</output></div>
          <button class="box y w39">RMS</button>
        </div>
        <svg class="display" viewBox="0 0 245 162"><rect width="245" height="162" rx="6" fill="#1a1e25"/><path d="M9.500 8.500h185v140H9.500zM32.500 8v140M55.500 8v140M78.500 8v140M101.500 8v140M125.500 8v140M148.500 8v140M171.500 8v140" fill="none" stroke="#43484e"/><path d="M9 28h37v5H9zM9 34h40v5H9zM9 72h95v5H9zM9 78h94v5H9zM9 116h98v5H9zM9 122h95v5H9z" fill="#ff6800"/><path d="M46 28h1v5h-1zM49 34h1v5h-1zM104 72h1v5h-1zM103 78h1v5h-1zM107 116h1v5h-1zM104 122h1v5h-1z" fill="#ffc80a"/><path d="M143.500 15.500h51v37h-51zM166.500 59.500h28v37h-28zM177.500 103.500h17v37h-17z" fill="#1c3038" stroke="#43484e"/><path d="M149.500 16v36M155.500 16v36M161.500 16v36M166.500 16v36M172.500 16v36M178.500 16v36M184.500 16v36M189.500 16v36M173.500 60v36M180.500 60v36M187.500 60v36M182.500 104v36M187.500 104v36" stroke="#2a444c"/>
          <g class="t10 axis" text-anchor="middle"><text x="10" y="158">80</text><text x="33" y="158">70</text><text x="56" y="158">60</text><text x="79" y="158">50</text><text x="102" y="158">40</text><text x="125" y="158">30</text><text x="148" y="158">20</text><text x="171" y="158">10</text><text x="193" y="158">0</text></g>
          <g class="t10"><text x="206" y="12" fill="#8f9aa8">Above</text><g fill="#ffc80a"><text x="202" y="29">-22.0 dB</text><text x="202" y="73">-12.0 dB</text><text x="202" y="117">-7.25 dB</text></g><g fill="#ff6800"><text x="202" y="45">1:4.17</text><text x="202" y="89">1:4.00</text><text x="202" y="133">1:4.00</text></g></g>
          <path d="M201.500 145.500h11v12h-11zM215.500 145.500h11v12h-11z" fill="none" stroke="#ff6800"/><path d="M229 145h12v13h-12z" fill="#ff6800"/><g class="t10" text-anchor="middle" fill="#ff6800"><text x="207" y="155">T</text><text x="221" y="155">B</text><text x="235" y="155" fill="#1a1e25">A</text></g></svg>
        <div class="col out">
          <div class="ctl mapped low"><b>Output</b><svg class="knob c gl" style="--v:85;--from:50"><use href="#knob-c"/></svg><output>16.6 dB</output></div>
          <div class="ctl mapped up"><svg class="knob c gl" style="--v:81;--from:50"><use href="#knob-c"/></svg><output>14.0 dB</output></div>
          <div class="ctl mapped up"><svg class="knob c gl" style="--v:62;--from:50"><use href="#knob-c"/></svg><output>6.11 dB</output></div>
        </div>
        <div class="col glob">
          <div class="ctl mapped low">Output<svg class="knob c gl" style="--v:48;--from:48"><use href="#knob-c"/></svg><output>-1.08 dB</output></div>
          <div class="ctl">Time<svg class="knob c" style="--v:50"><use href="#knob-c"/></svg><output>100 %</output></div>
          <div class="ctl">Amount<svg class="knob or" style="--v:100"><use href="#knob"/></svg><output>100 %</output></div>
        </div>
      </div>
    </section>

    <section class="dev lim cropped">
      <h2><svg class="ic"><use href="#power"/></svg>Limiter</h2>
      <div class="dbody">
        <div class="lim-l">
          <div class="ctl">Gain<svg class="knob c" style="--v:50"><use href="#knob-c"/></svg><output>0.00 dB</output></div>
          <label>Lookahead<span class="pick w49"><select class="box"><option>3 ms</option></select></span></label>
          <div class="ctl">Release<svg class="knob lt" style="--v:83"><use href="#knob"/></svg><output>300 ms</output></div>
          <button class="box y w49">Auto</button>
        </div>
      </div>
    </section>
  </div>
</section>

<footer class="status">
  <button class="round" aria-label="Info view"><svg width="20" height="20"><use href="#tri-up"/></svg></button>
  <div class="slot wide"></div>
  <div class="slot"></div>
  <div class="chain-map"><b>Master</b>
    <svg viewBox="0 0 179 18" width="179" height="18"><path d="M0 1h179v15H0z" fill="#979797"/><path d="M1 3h18M1 7h18M1 11h18M1 14h18M96 4h8M98 7h10M96 10h12M96 13h12" stroke="#333" stroke-dasharray="2 2 1 2"/><path d="M22 2h29v14H22zM61 2h11v8H61zM142 2h20v14h-20z" fill="#1a1e25"/><path d="M23 8h25M143 6h8M143 10h10M143 13h10" stroke="#e07020"/><path d="M37 7h3v2h-3zM49 3h2v2h-2zM136 4h3v2h-3zM94 8h3v2h-3zM54 5h2v9h-2z" fill="#ffc80a"/><path d="M112 5h18" stroke="#9ed2c8" stroke-width="2"/><path d="M118 12h10M76 4h6M76 8h10M78 12h8M53 4h6M53 8h6M53 12h6M165 4h10M165 9h12M165 13h8" stroke="#333" stroke-dasharray="3 1"/><path d="M52 2v14M74 2v14M92 2v14" stroke="#666"/><path d="M43 1h122v16H43z" fill="none" stroke="#000" stroke-width="2"/></svg></div>
  <button class="round" aria-label="Device view"><svg width="20" height="20"><use href="#tri-up"/></svg></button>
</footer>
<svg class="cursor" width="13" height="20" viewBox="0 0 13 20"><path d="M1 1v14.500l3.500-3L7 18l2.500-1-2.300-5.200H12z" fill="#fff" stroke="#222"/></svg>
</body>
</html>
```
FILE: styles.css
```css
* { box-sizing: border-box; }
body {
  margin: 0; min-height: 100vh; display: flex; flex-direction: column; position: relative;
  background: #787878; color: #111; overflow-x: hidden;
  font: 10px/12px "Liberation Sans", Arial, sans-serif;
  --dark: #505050; --edge: #5a5a5a; --face: #8c8c8c; --light: #b5b1b1; --line: #323232;
  --yellow: #ffc80a; --fill: #e07f3a; --from: 0;
}
button, input, select, output { font: inherit; color: inherit; margin: 0; padding: 0; border-radius: 0; appearance: none; }
h2, h3, h4, p, ol, hr { margin: 0; padding: 0; }
svg { display: block; flex: none; }
.defs { width: 0; height: 0; position: absolute; }
.sp { flex: 1; }
.ic { width: 14px; height: 14px; }
.round { border: 0; background: none; display: block; flex: none; }
.t10 { font-size: 10px; }
.t8 { font-size: 8px; text-anchor: middle; font-weight: bold; fill: #222; }
.dim { fill: #777; }
.grey { fill: #9a9a9a; }
.axis { fill: #8a8a8a; }

/* widths shared by small controls */
.w16 { width: 16px; } .w17 { width: 17px; } .w18 { width: 18px; } .w19 { width: 19px; } .w22 { width: 22px; } .w24 { width: 24px; }
.w28 { width: 28px; } .w30 { width: 30px; } .w31 { width: 31px; } .w37 { width: 37px; } .w38 { width: 38px; } .w39 { width: 39px; }
.w42 { width: 42px; } .w43 { width: 43px; } .w45 { width: 45px; } .w49 { width: 49px; } .w60 { width: 60px; } .w66 { width: 66px; } .w86 { width: 86px; }

/* toolbar */
.toolbar { display: flex; padding: 9px 8px 9px 9px; }
.group { display: flex; gap: 2px; }
.grow-a { flex: 297; } .grow-b { flex: 361; }
.tb {
  height: 17px; border: 1px solid #bababa; background: #979797; font-weight: bold; line-height: 15px;
  display: flex; align-items: center; justify-content: center; text-align: center;
}
.tb.on { background: var(--yellow); border-color: var(--yellow); }
.blank { background: #8c8c8c; }
.digits { font-size: 12px; font-weight: normal; white-space: pre; -webkit-text-stroke: 0.3px; }
.num { text-align: right; padding-right: 3px; }
.apart { margin-left: 12px; }
.tbp .tb { width: 100%; padding: 0 0 0 4px; text-align: left; }
.pick.tbp::after { top: 7px; right: 5px; border-width: 4px 3px 0; }
.leds { display: flex; flex-direction: column; gap: 1px; }
.leds i { width: 8px; height: 8px; border: 1px solid #bababa; background: #888; }
.cpu { background: linear-gradient(90deg, var(--yellow) 7px, #979797 7px); }

/* boxes */
.box {
  height: 13px; border: 1px solid var(--line); background: #979797; line-height: 11px; flex: none;
  display: flex; align-items: center; justify-content: center; text-align: center; white-space: nowrap; overflow: hidden;
}
.y { background: var(--yellow); }
.flat { background: #939393; }
.field { background: #c0c0c0; }
.mute { color: #5f5f5f; }
.vol { background: linear-gradient(90deg, var(--fill) var(--f), #c0c0c0 var(--f)); }
.cue { --fill: #2a85cf; }
.auto { background: linear-gradient(#a00808, #a00808) 0 0 / 4px 4px no-repeat, linear-gradient(90deg, var(--fill) var(--f), #c0c0c0 var(--f)); }
.pan { background: linear-gradient(to bottom right, transparent 50%, #999 50%) right 0 top 1px / 7px 5px no-repeat, linear-gradient(to top right, transparent 50%, #999 50%) right 0 bottom 1px / 7px 5px no-repeat, #c0c0c0; padding-right: 6px; }
.pan.flat { background: linear-gradient(to bottom right, transparent 50%, #777 50%) right 0 top 1px / 7px 5px no-repeat, linear-gradient(to top right, transparent 50%, #777 50%) right 0 bottom 1px / 7px 5px no-repeat, #939393; }
.dot { background: linear-gradient(#00b43c, #00b43c) 0 0 / 4px 4px no-repeat; text-align: left; padding-left: 1px; }
.pick { position: relative; display: block; flex: none; }
.pick select.box { width: 100%; background: #c0c0c0; text-align: left; padding: 0 12px 0 1px; }
.pick select.box.flat { background: #939393; }
.pick select.in { padding-left: 11px; }
.pick::after { content: ""; position: absolute; right: 3px; top: 4px; border: solid transparent; border-top-color: #000; border-width: 5px 4px 0; pointer-events: none; }

/* arranger */
.arranger { display: flex; padding-right: 8px; }
.rail { width: 32px; padding-left: 7px; display: flex; flex-direction: column; justify-content: space-between; }
.arr-left { flex: 1; min-width: 0; background: var(--dark); border-radius: 5px 5px 0 5px; padding: 5px 0 0 5px; }
.overview { border: 2px solid #000; margin-right: 5px; background: #8a8a8a; }
.overview svg { width: 100%; height: 52px; }
.body { display: grid; grid-template-columns: minmax(0, 1fr) 253px; gap: 2px; padding-right: 1px; }
.timeline { display: flex; flex-direction: column; }
.bars { display: grid; grid-template-columns: repeat(29, minmax(0, 4fr)) minmax(0, 3.240fr); height: 25px; padding: 13px 0 0 1px; }
.bars span { padding-left: 5px; line-height: 13px; color: #000; background: linear-gradient(#222, #222) 0 7px / 1px 5px no-repeat, linear-gradient(#222, #222) 0 7px / 3px 1px no-repeat, linear-gradient(#222, #222) 50% 11px / 1px 1px no-repeat; }
.lines { border-left: 1px solid #2b2e40; background: repeating-linear-gradient(90deg, transparent 0 calc(1.677% - 1px), #767676 calc(1.677% - 1px) 1.677%) #8b8b8b; }
.scrub { height: 25px; padding-top: 1px; }
.brace { width: 87.200%; height: 11px; background: #979797; border: solid #2b2e40; border-width: 1px 1px 1px 0; display: flex; justify-content: space-between; }
.gap { height: 6px; background: var(--edge); }
.gap svg { width: 100%; height: 6px; }
.canvas svg { width: 100%; height: 594px; }
.master-lane { height: 17px; background-color: #aeacac; display: flex; justify-content: flex-end; align-items: center; position: relative; padding-right: 3px; }
.master-lane b { font-size: 18px; color: #6b6b6b; background: #aeacac; }
.master-lane svg { position: absolute; left: 0; top: -8px; width: 100%; height: 32px; }
.times { display: grid; grid-template-columns: repeat(17, minmax(0, 1fr)) minmax(0, 0.440fr); height: 19px; padding: 1px 0 0 1px; }
.times span { padding: 2px 0 0 3px; line-height: 12px; color: #000; background: linear-gradient(#222, #222) 0 0 / 1px 7px no-repeat, linear-gradient(#222, #222) 0 7px / 2px 1px no-repeat, linear-gradient(#222, #222) 25% 0 / 1px 2px no-repeat, linear-gradient(#222, #222) 50% 0 / 1px 2px no-repeat, linear-gradient(#222, #222) 75% 0 / 1px 2px no-repeat; }

/* track headers */
.heads { display: flex; flex-direction: column; }
.locators { height: 57px; display: flex; align-items: flex-end; gap: 2px; padding: 0 0 8px 2px; }
.locators .w24 { margin-left: 2px; }
.set { height: 13px; width: 29px; border: 1px solid #333; border-radius: 7px; background: #979797; line-height: 11px; }
.tracks, .group-tracks { display: flex; flex-direction: column; gap: 2px; background: var(--edge); }
.tracks { height: 593px; overflow: hidden; }
.group-tracks { background: linear-gradient(90deg, #3c3c3c 11px, var(--edge) 11px); }
.track { display: grid; grid-template-columns: 132px 119px; gap: 2px; height: 68px; flex: none; }
.solo-h { height: 52px; }
.small { height: 17px; }
.last { height: 31px; overflow: hidden; }
.title { background: var(--face); padding: 2px 3px 0; display: flex; flex-direction: column; gap: 4px; min-width: 0; }
.solo-h .title, .solo-h .cells { padding-top: 3px; }
.child .title { margin-left: 13px; }
.title h3 { font: italic bold 11px/13px "Liberation Sans", Arial, sans-serif; display: flex; align-items: center; gap: 5px; height: 13px; white-space: nowrap; }
.white { background: #fff; }
.dark { background: #3c3c3c; color: #fff; justify-content: space-between; padding-bottom: 0; position: relative; }
.dark::after { content: ""; position: absolute; left: 2px; bottom: 1px; border: solid transparent; border-top-color: #000; border-width: 4px 4px 0; }
.sub { background: var(--face); color: #111; margin: 0 -3px 0 8px; padding: 2px 3px; }
.empty { background: none; display: block; }
.add { align-self: flex-end; }
.mix { background: var(--face); display: flex; justify-content: space-between; padding: 0 3px 0 3px; }
.cells { display: flex; flex-wrap: wrap; gap: 4px 5px; width: 102px; padding-top: 2px; align-content: flex-start; }
.cells .box { width: 47px; }
.cells .s { width: 21px; }
.cells .inf { background: #c0c0c0; }
.cells .inf + .inf { margin-right: 20px; }
.cells .act { background: var(--yellow); font-weight: bold; }
.cells .blue { background: #2a85cf; }
.solo-h .s:nth-child(2), .blue { margin-right: 20px; }
.rec::before { content: ""; width: 7px; height: 7px; border-radius: 50%; background: #000; }
.meter { display: flex; gap: 1px; width: 7px; padding: 1px 0; --a: 0%; --b: 0%; flex: none; }
.meter::before, .meter::after { content: ""; flex: 1; background: linear-gradient(#8c8c8c, #8c8c8c) 0 7px / 100% 1px no-repeat, linear-gradient(to top, #24ff62 var(--a), #1a1e25 var(--a)); }
.meter::after { background: linear-gradient(#8c8c8c, #8c8c8c) 0 7px / 100% 1px no-repeat, linear-gradient(to top, #24ff62 var(--b), #1a1e25 var(--b)); }
.master { margin-top: 6px; box-shadow: 0 -6px var(--edge); background: var(--edge); }
.master .title, .master .mix { background: var(--light); }
.master h3 { gap: 10px; }

/* right rail */
.arr-right { width: 25px; display: flex; flex-direction: column; }
.notch-back { background: var(--dark); }
.notch { height: 48px; background: #787878; border-bottom-left-radius: 5px; display: flex; flex-direction: column; gap: 5px; padding-left: 6px; }
.scroller { flex: 1; background: var(--dark); border-radius: 0 5px 5px 0; display: flex; flex-direction: column; align-items: center; padding: 8px 0 29px 6px; }
.thumb { width: 9px; height: 367px; background: #33373b; margin-top: 3px; }
.dn { margin-top: auto; }
.modes { display: flex; flex-direction: column; gap: 6px; padding-top: 8px; }
.modes button { width: 13px; height: 13px; border: 0; border-radius: 50%; background: #1f242b; color: #999; font-size: 7px; line-height: 13px; }
.modes .on { background: var(--yellow); color: #111; }

/* bottom panels */
.bottom { display: flex; gap: 8px; padding: 8px 8px 0; }
.info { width: 200px; height: 200px; background: var(--face); border: 5px solid var(--edge); border-radius: 6px; flex: none; }
.info h2 { background: var(--light); height: 17px; padding-left: 5px; font: italic bold 11px/17px "Liberation Sans", Arial, sans-serif; }
.info p { font-weight: bold; line-height: 15px; padding: 2px 0 0 4px; white-space: nowrap; }
.devices { flex: 1; min-width: 0; height: 200px; background: var(--edge); border-radius: 6px; padding: 6px 5px; display: flex; gap: 2px; }
.dev { background: var(--light); display: flex; flex-direction: column; flex: none; }
.dev h2 { height: 17px; font: italic bold 11px/17px "Liberation Sans", Arial, sans-serif; display: flex; align-items: center; gap: 2px; padding: 0 3px 0 2px; white-space: nowrap; flex: none; }
.dev h2 .ic:first-child { margin-right: 2px; }
.dbody { flex: 1; background: var(--face); margin: 0 2px 2px; display: flex; min-height: 0; border-radius: 0 0 3px 3px; }
.row { display: flex; gap: 3px; }
label { display: block; }
.ctl { display: flex; flex-direction: column; align-items: center; line-height: 12px; white-space: nowrap; position: relative; }
.ctl output, .macro output { margin-top: -3px; }
.mapped::before { content: ""; position: absolute; width: 5px; height: 5px; background: #00b43c; left: 3px; top: 12px; }
.low.mapped::before { top: 17px; }
.up.mapped::before { top: 5px; left: 4px; }

/* knobs: --v is the value in percent, the track is drawn from --t0 on */
.knob { width: 28px; height: 28px; --arc: none; --track: #111; --needle: #111; --tri: none; --tl: #333; --t0: 0; }
.knob.c { height: 34px; }
.knob.or { --arc: #e8731c; --t0: var(--v); }
.knob.lt { --arc: #c6c8d4; --track: #666; --needle: #666; --t0: var(--v); }
.knob.gy { --track: #666; --needle: #666; }
.knob.gl { --arc: #c6c8d4; --track: #666; --needle: #666; --tri: #c6c8d4; }
.knob.big { width: 41px; height: 41px; --arc: #c6c8d4; --track: #5c5c5c; --needle: #5c5c5c; --t0: var(--v); background: radial-gradient(circle, #868686 0 17px, transparent 18px); }
.k-track, .k-arc { fill: none; stroke-width: 2; stroke: var(--track); }
.k-track { stroke-dasharray: 0px calc(1px * var(--t0)) 200px 0px; }
.k-arc { stroke: var(--arc); stroke-dasharray: 0px calc(1px * var(--from)) calc(1px * (var(--v) - var(--from))) 200px; }
.k-needle { stroke: var(--needle); stroke-width: 2; transform-origin: 14px 14px; transform: rotate(calc((var(--v) - 50) * 2.900deg)); }
.k-low { transform-origin: 14px 20px; }
.k-tri { fill: var(--tri); stroke: var(--tl); stroke-width: 1; }

.eq { width: 163px; }
.eq .dbody { background: none; gap: 2px; margin-left: 0; margin-right: 2px; }
.eq-l { width: 111px; }
.graph { width: 111px; height: 134px; }
.chips { display: flex; gap: 2px; padding-top: 2px; }
.chip { width: 45px; height: 33px; background: var(--face); border-radius: 3px; padding: 3px 4px; font-weight: bold; }
.cut { width: 17px; background: none; padding: 3px 4px 3px 0; }
.chip b, .chip label { display: flex; align-items: center; gap: 7px; padding: 3px 0 0 8px; }
.chip b { padding: 5px 0 0 1px; }
.chip input { width: 11px; height: 11px; border: 1px solid #222; }
.chip .shape { width: 37px; }
.cut .pick::after { right: 2px; }
.eq-r { width: 48px; background: var(--face); border-radius: 4px; padding: 6px 3px 0; font-weight: bold; display: flex; flex-direction: column; gap: 4px; }
.eq-r .row { gap: 4px; margin-bottom: -1px; }
.eq-r input, .eq-r select { width: 100%; font-weight: normal; }
.pick.tight select.box { padding-right: 9px; }
.pick.tight::after { right: 2px; }

.glue { width: 274px; }
.brand { font: bold 10px/17px "Liberation Sans", Arial, sans-serif; color: #6e6e6e; margin-right: 2px; }
.dials { width: 66px; margin-right: 3px; display: flex; flex-direction: column; align-items: center; gap: 3px; padding-top: 5px; }
.dial { text-align: center; }
.dial svg { width: 64px; height: 40px; overflow: visible; }
.ring { fill: none; stroke: #666; stroke-width: 2; }
.vu { width: 140px; height: 157px; margin-top: 7px; border-radius: 7px; overflow: hidden; background: #7b7b7e; }
.needle { width: 140px; height: 78px; background: #1a1e25; }
.pair { display: flex; justify-content: space-around; padding: 8px 5px 0; }
.pair output { margin-top: -2px; }
.glue-r { flex: 1; display: flex; flex-direction: column; align-items: center; padding-top: 5px; }
.clip { display: flex; align-items: center; gap: 5px; margin-bottom: 3px; }
.clip i { width: 6px; height: 6px; border-radius: 50%; background: #666; }
.glue-r hr { width: 45px; border: 0; border-top: 1px solid #555; margin: 8px 0 12px; }
.glue-r .mapped { margin-top: 12px; }

.util { width: 81px; position: relative; }
.util::before { content: ""; position: absolute; left: 2px; top: 1px; width: 5px; height: 5px; background: #00b43c; }
.util .dbody { flex-direction: column; align-items: center; padding-top: 3px; }
.util .ctl { margin-bottom: 6px; }
.util label { text-align: center; padding-top: 2px; line-height: 13px; position: relative; }
.wd.mapped::before { left: 0; top: 14px; }
.util .row:last-child { margin-top: 6px; }

.lim { width: 113px; }
.lim-l { width: 59px; flex: none; display: flex; flex-direction: column; align-items: center; padding-top: 5px; }
.lim-l label { line-height: 13px; margin: 4px 0 10px; }
.lim-l .w49 { margin-top: 1px; }
.lim-l label .w49 { margin-top: 0; }
.lim-r { padding-top: 5px; }
.lim-r .y { margin-top: 4px; }
.scale { display: flex; padding: 7px 0 0 14px; }
.scale i { width: 8px; height: 100px; background: #1a1e25; margin-top: 6px; }
.scale ol { list-style: none; line-height: 14px; width: 26px; text-align: center; }
.tail { width: 18px; border-top-right-radius: 4px; border-bottom-right-radius: 4px; }
.between { width: 7px; display: flex; align-items: center; }
.between .meter { width: 6px; height: 42px; margin-left: 1px; }
.cropped { flex: 1; overflow: hidden; }
.cropped.lim { width: auto; min-width: 0; }
.cropped h2 { gap: 0; padding-right: 0; }
.cropped .dbody { margin-right: 0; }

.rack { width: 492px; border-top-left-radius: 4px; border-bottom-left-radius: 4px; }
.rack h2 { padding-left: 3px; }
.map { width: 33px; margin: 0 2px 0 37px; font-weight: normal; font-style: normal; font-size: 10px; }
.tabs { width: 19px; padding: 3px 0 0 1px; display: flex; flex-direction: column; gap: 3px; }
.macros { display: grid; grid-template-columns: repeat(4, 50px); grid-template-rows: 80px 80px; gap: 2px; padding-top: 4px; }
.macro { border: 1px solid #555; border-radius: 4px; display: flex; flex-direction: column; align-items: center; overflow: hidden; white-space: nowrap; }
.macro h4 { font-weight: normal; line-height: 11px; padding-top: 3px; height: 28px; width: 100%; text-align: center; background: var(--light); margin-bottom: 6px; flex: none; }
.hi h4 { background: #d6d6d6; } .gr h4 { background: #a8a8a8; }
.chains { flex: 1; padding: 11px 6px 0 6px; display: flex; flex-direction: column; }
.chain-bar { display: flex; gap: 3px; padding: 0 8px 0 4px; margin-bottom: 6px; }
.hide { background: #ff6800; color: #4a2500; }
.chain-box { height: 134px; border: 1px solid #555; border-radius: 4px 0 0 4px; display: flex; }
.cs { width: 17px; padding: 3px 0 2px 4px; display: flex; flex-direction: column; gap: 3px; }
.cs i { flex: 1; width: 9px; background: #555; }
.list { flex: 1; display: flex; flex-direction: column; }
.chain { height: 19px; border-bottom: 1px solid #555; display: flex; align-items: center; gap: 4px; padding: 0 1px 0 3px; }
.chain b { flex: 1; }
.chain .meter { width: 5px; height: 16px; }
.chain .ic { margin: 0 -1px; }
.chain .dot { margin-left: -1px; }
.sel { background: #9ed2c8; }
.drop { flex: 1; display: flex; align-items: center; justify-content: center; font-weight: bold; }

.mb { width: 467px; }
.mb .dbody { padding-top: 4px; }
.bands { width: 76px; padding-left: 5px; }
.bands > b { display: block; text-align: center; width: 60px; }
.band { display: grid; grid-template-columns: 47px 17px; gap: 2px; margin: 8px 0 16px; align-items: center; }
.band .box { width: 100%; }
.band span { grid-row: span 2; text-align: center; }
.band + .band { margin-top: 0; }
.bands .w66 { margin-top: -6px; }
.i::before { content: ""; width: 9px; height: 9px; border: 1px solid #222; border-radius: 50%; background: linear-gradient(#222, #222) center / 1px 5px no-repeat; }
.col { width: 40px; display: flex; flex-direction: column; align-items: center; gap: 1px; }
.col .w39 { margin-top: 2px; }
.display { width: 245px; height: 162px; margin: 0 2px 0 5px; }
.out { border-right: 1px solid #666; width: 47px; height: 160px; }
.glob { width: 48px; gap: 2px; }

/* status */
.status { display: flex; align-items: center; padding: 0 8px 8px 7px; height: 38px; }
.slot { width: 208px; height: 22px; border: 4px solid var(--edge); border-radius: 5px; background: var(--face); margin: 8px 8px 0 0; align-self: flex-start; }
.wide { flex: 1; margin-left: 8px; }
.chain-map { width: 224px; height: 30px; background: var(--edge); border-radius: 0 0 5px 5px; align-self: flex-start; display: flex; align-items: center; gap: 4px; padding: 8px 5px 0 5px; margin-right: 7px; }
.chain-map b { width: 31px; }
.status .round { margin-top: 8px; }
.cursor { position: absolute; left: 1311px; top: 972px; }
```
